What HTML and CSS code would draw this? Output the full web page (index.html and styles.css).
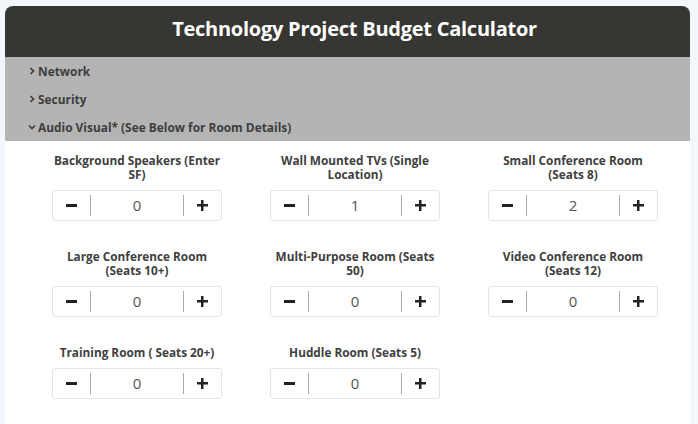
FILE: index.html
```html
<!DOCTYPE html>
<html>
<head>
<meta charset="utf-8">
<link rel="stylesheet" href="styles.css">
</head>
<body>
<div class="card">
  <div class="header"><h1 class="title">Technology Project Budget Calculator</h1></div>
  <div class="sections">
    <div class="sec"><svg class="chev" viewBox="0 0 6 8" width="6" height="8"><path d="M1.5 1 L4.5 4 L1.5 7" fill="none" stroke="#3a3a3a" stroke-width="1.6"/></svg><span>Network</span></div>
    <div class="sec"><svg class="chev" viewBox="0 0 6 8" width="6" height="8"><path d="M1.5 1 L4.5 4 L1.5 7" fill="none" stroke="#3a3a3a" stroke-width="1.6"/></svg><span>Security</span></div>
    <div class="sec"><svg class="chev" viewBox="0 0 8 6" width="8" height="6"><path d="M1 1.5 L4 4.5 L7 1.5" fill="none" stroke="#3a3a3a" stroke-width="1.6"/></svg><span>Audio Visual* (See Below for Room Details)</span></div>
  </div>
  <div class="grid">
    <div class="item">
      <div class="label">Background Speakers (Enter SF)</div>
      <div class="stepper"><div class="btn"><span class="minus"></span></div><div class="val">0</div><div class="btn"><span class="plus"></span></div></div>
    </div>
    <div class="item">
      <div class="label">Wall Mounted TVs (Single Location)</div>
      <div class="stepper"><div class="btn"><span class="minus"></span></div><div class="val">1</div><div class="btn"><span class="plus"></span></div></div>
    </div>
    <div class="item">
      <div class="label">Small Conference Room (Seats 8)</div>
      <div class="stepper"><div class="btn"><span class="minus"></span></div><div class="val">2</div><div class="btn"><span class="plus"></span></div></div>
    </div>
    <div class="item">
      <div class="label">Large Conference Room (Seats 10+)</div>
      <div class="stepper"><div class="btn"><span class="minus"></span></div><div class="val">0</div><div class="btn"><span class="plus"></span></div></div>
    </div>
    <div class="item">
      <div class="label">Multi-Purpose Room (Seats 50)</div>
      <div class="stepper"><div class="btn"><span class="minus"></span></div><div class="val">0</div><div class="btn"><span class="plus"></span></div></div>
    </div>
    <div class="item">
      <div class="label">Video Conference Room (Seats 12)</div>
      <div class="stepper"><div class="btn"><span class="minus"></span></div><div class="val">0</div><div class="btn"><span class="plus"></span></div></div>
    </div>
    <div class="item">
      <div class="label">Training Room ( Seats 20+)</div>
      <div class="stepper"><div class="btn"><span class="minus"></span></div><div class="val">0</div><div class="btn"><span class="plus"></span></div></div>
    </div>
    <div class="item">
      <div class="label">Huddle Room (Seats 5)</div>
      <div class="stepper"><div class="btn"><span class="minus"></span></div><div class="val">0</div><div class="btn"><span class="plus"></span></div></div>
    </div>
  </div>
</div>
</body>
</html>
```
FILE: styles.css
```css
html, body {
  margin: 0;
  padding: 0;
  background: #f3f6fa;
  font-family: "Open Sans", "Noto Sans", sans-serif;
}
.card {
  margin: 6px 0 0 5px;
  width: 685px;
  height: 430px;
  background: #ffffff;
  border-radius: 8px 8px 0 0;
  overflow: hidden;
}
.header {
  height: 51px;
  box-sizing: border-box;
  background: #363733;
  display: flex;
  align-items: center;
  justify-content: center;
  padding: 0 0 6px 14px;
}
.title {
  margin: 0;
  color: #ffffff;
  font-size: 20px;
  font-weight: 700;
  letter-spacing: -0.25px;
}
.sections {
  background: #b4b4b4;
  padding-left: 23px;
}
.sec {
  height: 28px;
  display: flex;
  align-items: center;
  gap: 2px;
  font-size: 11.9px;
  font-weight: 700;
  color: #3e3e3e;
}
.chev {
  width: 8px;
  display: block;
}
.grid {
  display: grid;
  grid-template-columns: repeat(3, 218px);
  row-gap: 28px;
  padding: 12px 0 0 23px;
  align-items: start;
}
.item {
  display: flex;
  flex-direction: column;
  align-items: center;
}
.label {
  width: 172px;
  text-align: center;
  font-size: 11.8px;
  line-height: 14px;
  font-weight: 700;
  color: #404040;
  margin-bottom: 9px;
}
.stepper {
  width: 168px;
  height: 29px;
  border: 1px solid #e4e4e4;
  border-radius: 3px;
  display: flex;
  align-items: center;
}
.btn {
  width: 37px;
  height: 100%;
  display: flex;
  align-items: center;
  justify-content: center;
}
.val {
  flex: 1;
  height: 21px;
  border-left: 1px solid #a8a8a8;
  border-right: 1px solid #a8a8a8;
  text-align: center;
  font-size: 15px;
  line-height: 21px;
  color: #555555;
}
.minus {
  width: 11px;
  height: 3px;
  background: #222;
  display: block;
}
.plus {
  width: 11px;
  height: 11px;
  display: block;
  background:
    linear-gradient(#222, #222) center / 11px 2.5px no-repeat,
    linear-gradient(#222, #222) center / 2.5px 11px no-repeat;
}
```
